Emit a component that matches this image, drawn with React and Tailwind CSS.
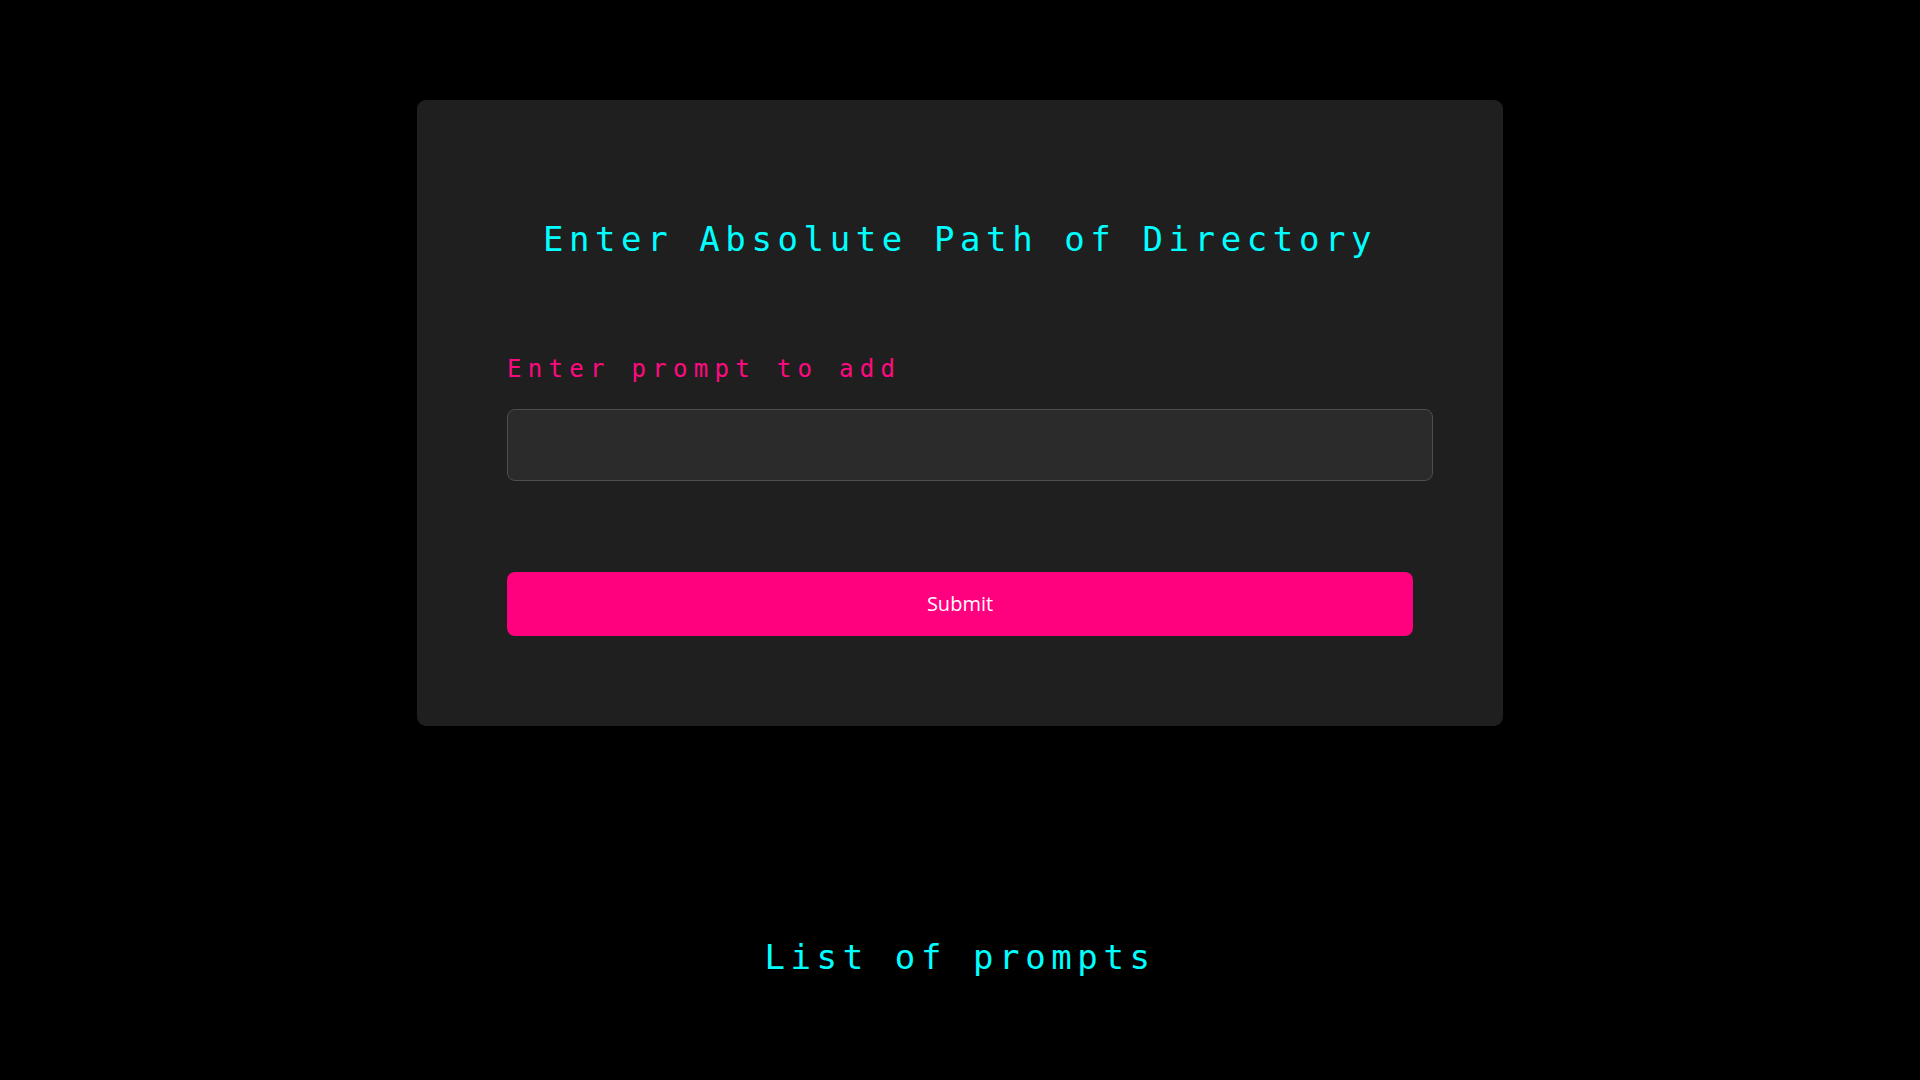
import React, { useState } from 'react';

const mono = { fontFamily: '"DejaVu Sans Mono", "Liberation Mono", monospace' };

const App = () => {
  const [prompt, setPrompt] = useState('');
  const [prompts, setPrompts] = useState([]);

  const handleSubmit = (e) => {
    e.preventDefault();
    if (!prompt.trim()) return;
    setPrompts([...prompts, prompt.trim()]);
    setPrompt('');
  };

  return (
    <div className="min-h-screen w-full bg-black flex flex-col items-center pt-[100px] pb-20">
      {/* Form card */}
      <form
        onSubmit={handleSubmit}
        className="w-[1086px] bg-[#1f1f1f] rounded-[9px] flex flex-col pt-[115px] pb-[90px] px-[90px]"
      >
        <h1
          className="text-[34px] leading-[48px] text-[#00ffff] text-center tracking-[5.6px] font-normal"
          style={mono}
        >
          Enter Absolute Path of Directory
        </h1>

        <label
          className="mt-[90px] text-[24px] leading-[32px] text-[#ff0a80] tracking-[6.3px]"
          style={mono}
        >
          Enter prompt to add
        </label>

        <input
          type="text"
          value={prompt}
          onChange={(e) => setPrompt(e.target.value)}
          className="mt-[24px] w-[926px] h-[72px] bg-[#2b2b2b] border border-[#4d4d4d] rounded-[8px] px-3 text-white text-lg outline-none"
        />

        <button
          type="submit"
          className="mt-[91px] w-[906px] h-[64px] bg-[#ff007f] rounded-[8px] text-white text-[20px] font-normal"
          style={{ fontFamily: '"Open Sans", "Noto Sans", sans-serif' }}
        >
          Submit
        </button>
      </form>

      {/* Prompt list */}
      <div className="mt-[207px] flex flex-col items-center">
        <h2
          className="text-[34px] leading-[48px] text-[#00ffff] text-center tracking-[5.6px] font-normal"
          style={mono}
        >
          List of prompts
        </h2>
        <ul className="mt-4 flex flex-col gap-2">
          {prompts.map((p, i) => (
            <li key={i} className="text-white text-lg" style={mono}>
              {p}
            </li>
          ))}
        </ul>
      </div>
    </div>
  );
};

export default App;
